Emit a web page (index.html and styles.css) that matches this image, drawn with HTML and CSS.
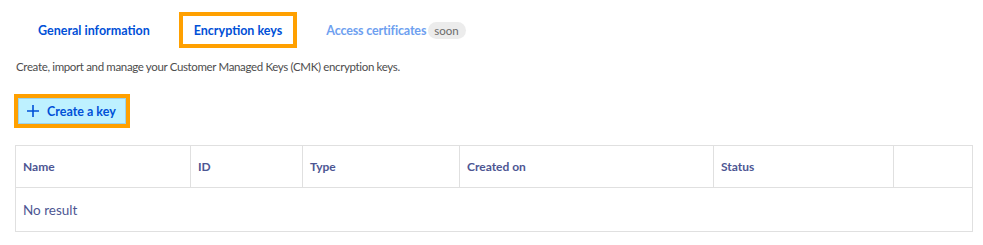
FILE: index.html
```html
<!DOCTYPE html>
<html lang="en">
<head>
  <meta charset="UTF-8">
  <title>Encryption keys</title>
  <link rel="stylesheet" href="styles.css">
</head>
<body>

  <div class="tabs">
    <span class="tab">General information</span>
    <span class="tab active">Encryption keys</span>
    <span class="tab disabled">Access certificates <span class="badge">soon</span></span>
  </div>

  <p class="intro">Create, import and manage your Customer Managed Keys (CMK) encryption keys.</p>

  <div class="focus-ring">
    <button class="btn-create">
      <svg width="14" height="14" viewBox="0 0 14 14"><path d="M7 1v12M1 7h12" stroke="#0050d7" stroke-width="1.6" fill="none"/></svg>
      Create a key
    </button>
  </div>

  <table class="keys">
    <thead>
      <tr>
        <th class="c-name">Name</th>
        <th class="c-id">ID</th>
        <th class="c-type">Type</th>
        <th class="c-date">Created on</th>
        <th class="c-status">Status</th>
        <th></th>
      </tr>
    </thead>
    <tbody>
      <tr><td colspan="6">No result</td></tr>
    </tbody>
  </table>

</body>
</html>
```

FILE: styles.css
```css
body {
  margin: 0;
  padding: 0 11px 0 15px;
  font-family: Lato, "Source Sans Pro", sans-serif;
  background: #fff;
}
.tabs {
  display: flex;
  align-items: center;
  padding-top: 12px;
  height: 36px;
}
.tab {
  font-size: 12.5px;
  font-weight: bold;
  color: #0050d7;
  display: flex;
  align-items: center;
  margin-right: 29px;
}
.tab:first-child { margin-left: 23px; margin-right: 29px; }
.tab.active {
  border: 4px solid #ffa000;
  padding: 0 11px;
  height: 28px;
}
.tab.disabled { color: #6e9ff0; letter-spacing: -0.15px; }
.badge {
  display: inline-block;
  margin-left: 2px;
  background: #ececec;
  color: #6b6b6b;
  font-weight: normal;
  font-size: 11.5px;
  letter-spacing: 0;
  border-radius: 9px;
  padding: 2px 7px 2px 6px;
}
.intro {
  margin: 12px 0 0 1px;
  font-size: 11.5px;
  letter-spacing: -0.35px;
  color: #4d4d4d;
}
.focus-ring {
  display: inline-block;
  margin-top: 21px;
  border: 4px solid #ffa000;
  margin-left: -1px;
}
.btn-create {
  display: flex;
  align-items: center;
  gap: 7px;
  height: 26px;
  padding: 0 9px 0 7px;
  background: #bef1ff;
  border: 1px solid #9ad3ee;
  color: #0050d7;
  font-family: inherit;
  font-size: 12.5px;
  font-weight: bold;
  cursor: pointer;
}
.keys {
  margin-top: 17px;
  width: 958px;
  border-collapse: collapse;
  border: 1px solid #e0e0e0;
  font-size: 12px;
  color: #4d5693;
}
.keys th, .keys td {
  border: 1px solid #e0e0e0;
  text-align: left;
  padding: 0 7px;
}
.keys th { height: 41px; font-weight: bold; }
.keys td { height: 43px; font-size: 13.5px; }
.c-name { width: 160px; }
.c-id { width: 97px; }
.c-type { width: 142px; }
.c-date { width: 239px; }
.c-status { width: 165px; }
```
